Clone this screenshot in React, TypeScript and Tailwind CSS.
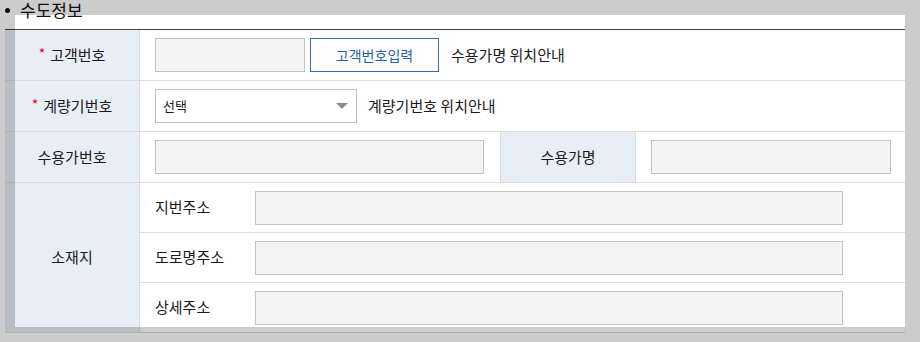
const font = "font-['Noto_Sans_CJK_KR','Noto_Sans',sans-serif]";

function Th({ children, req, className = '' }: { children: React.ReactNode; req?: boolean; className?: string }) {
  return (
    <div className={`flex items-center justify-center bg-[#e8eef6] text-[15px] text-[#1a1a1a] ${className}`}>
      {req && <span className="text-[#e4002b] mr-[5px] text-[14px] relative top-[-2px]">*</span>}
      {children}
    </div>
  );
}

function Field({ w }: { w: string }) {
  return <div className={`h-[34px] border border-[#c2c2c2] bg-[#f4f4f4] ${w}`} />;
}

export default function App() {
  return (
    <div className={`relative w-[920px] h-[342px] overflow-hidden bg-white ${font}`}>
      {/* 제목 */}
      <h2 className="h-[29px] pl-[5px] flex items-start text-[17px] leading-[20px] text-[#111] font-normal">
        <span className="mt-[8px] mr-[10px] w-[5px] h-[5px] rounded-full bg-[#111]" />
        수도정보
      </h2>

      <div className="ml-[5px] w-[900px] border-t border-[#444]">
        {/* 고객번호 */}
        <div className="flex h-[51px] border-b border-[#dcdcdc]">
          <Th req className="w-[135px] border-r border-[#dcdcdc]">고객번호</Th>
          <div className="flex-1 flex items-center pl-[15px] text-[15px] text-[#1a1a1a]">
            <Field w="w-[150px]" />
            <button className="ml-[5px] h-[34px] w-[129px] border border-[#2f6fc0] bg-white text-[14px] text-[#1f5fae]">
              고객번호입력
            </button>
            <span className="ml-[12px]">수용가명 위치안내</span>
          </div>
        </div>

        {/* 계량기번호 */}
        <div className="flex h-[51px] border-b border-[#dcdcdc]">
          <Th req className="w-[135px] border-r border-[#dcdcdc]">계량기번호</Th>
          <div className="flex-1 flex items-center pl-[15px] text-[15px] text-[#1a1a1a]">
            <div className="h-[34px] w-[202px] border border-[#c2c2c2] bg-white flex items-center justify-between pl-[7px] pr-[8px]">
              <span className="text-[13px] text-[#1a1a1a]">선택</span>
              <svg width="12" height="6" viewBox="0 0 12 6">
                <path d="M0 0H12L6 6Z" fill="#8c8c8c" />
              </svg>
            </div>
            <span className="ml-[11px]">계량기번호 위치안내</span>
          </div>
        </div>

        {/* 수용가번호 / 수용가명 */}
        <div className="flex h-[51px] border-b border-[#dcdcdc]">
          <Th className="w-[135px] border-r border-[#dcdcdc]">수용가번호</Th>
          <div className="w-[360px] flex items-center pl-[15px]">
            <Field w="w-[329px]" />
          </div>
          <Th className="w-[136px] border-x border-[#dcdcdc]">수용가명</Th>
          <div className="flex-1 flex items-center pl-[15px]">
            <Field w="w-[240px]" />
          </div>
        </div>

        {/* 소재지 */}
        <div className="flex border-b border-[#dcdcdc]">
          <Th className="w-[135px] border-r border-[#dcdcdc]">소재지</Th>
          <div className="flex-1 flex flex-col text-[15px] text-[#1a1a1a]">
            {['지번주소', '도로명주소', '상세주소'].map((label, i) => (
              <div key={label} className={`flex items-center pl-[15px] ${i < 2 ? 'h-[50px] border-b border-[#dcdcdc]' : 'h-[49px]'}`}>
                <span className="w-[100px]">{label}</span>
                <Field w="w-[588px]" />
              </div>
            ))}
          </div>
        </div>
      </div>

      {/* 강조 영역 */}
      <div className="pointer-events-none absolute left-[15px] top-[15px] w-[890px] h-[312px] shadow-[0_0_0_9999px_rgba(0,0,0,0.2)]" />
    </div>
  );
}
